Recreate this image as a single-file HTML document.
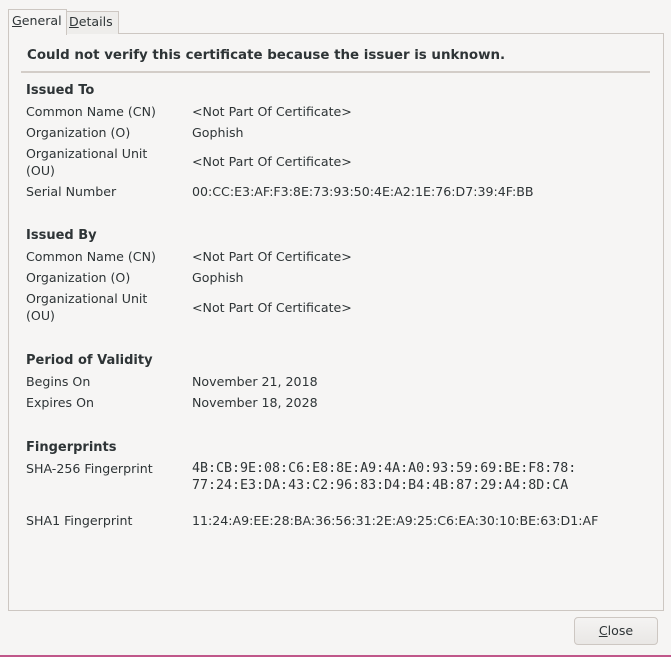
<html><head><style>
body{margin:0;width:671px;height:657px;background:#f6f5f4;font-family:"DejaVu Sans","Liberation Sans",sans-serif;font-size:12.6px;color:#2e3436;position:relative;overflow:hidden}
.a{position:absolute;white-space:nowrap;line-height:17px}
.b{font-weight:bold;font-size:13px}
.m{font-family:"DejaVu Sans Mono","Liberation Mono",monospace;font-size:13.3px}
</style></head><body>
<div style="position:absolute;left:8px;top:33px;width:654px;height:576px;border:1px solid #cdc7c2;background:#f6f5f4"></div>
<div style="position:absolute;left:8px;top:9px;width:57px;height:25px;border:1px solid #cdc7c2;border-bottom:none;background:#f6f5f4"></div>
<div style="position:absolute;left:66px;top:11px;width:51px;height:22px;border:1px solid #cdc7c2;border-bottom:none;background:#eeedeb"></div>
<div class="a" style="left:12px;top:12px"><u>G</u>eneral</div>
<div class="a" style="left:69px;top:13px"><u>D</u>etails</div>
<div class="a b" style="left:27px;top:47px;font-size:13.4px">Could not verify this certificate because the issuer is unknown.</div>
<div style="position:absolute;left:21px;top:71px;width:629px;height:2px;background:#d3cdc8"></div>
<div class="a b" style="left:26px;top:82px">Issued To</div>
<div class="a" style="left:26px;top:103px">Common Name (CN)</div><div class="a" style="left:192px;top:103px">&lt;Not Part Of Certificate&gt;</div>
<div class="a" style="left:26px;top:124px">Organization (O)</div><div class="a" style="left:192px;top:124px">Gophish</div>
<div class="a" style="left:26px;top:145px">Organizational Unit<br>(OU)</div><div class="a" style="left:192px;top:153px">&lt;Not Part Of Certificate&gt;</div>
<div class="a" style="left:26px;top:183px">Serial Number</div><div class="a" style="left:192px;top:183px">00:CC:E3:AF:F3:8E:73:93:50:4E:A2:1E:76:D7:39:4F:BB</div>
<div class="a b" style="left:26px;top:227px">Issued By</div>
<div class="a" style="left:26px;top:248px">Common Name (CN)</div><div class="a" style="left:192px;top:248px">&lt;Not Part Of Certificate&gt;</div>
<div class="a" style="left:26px;top:269px">Organization (O)</div><div class="a" style="left:192px;top:269px">Gophish</div>
<div class="a" style="left:26px;top:290px">Organizational Unit<br>(OU)</div><div class="a" style="left:192px;top:299px">&lt;Not Part Of Certificate&gt;</div>
<div class="a b" style="left:26px;top:352px">Period of Validity</div>
<div class="a" style="left:26px;top:373px">Begins On</div><div class="a" style="left:192px;top:373px">November 21, 2018</div>
<div class="a" style="left:26px;top:394px">Expires On</div><div class="a" style="left:192px;top:394px">November 18, 2028</div>
<div class="a b" style="left:26px;top:439px">Fingerprints</div>
<div class="a" style="left:26px;top:460px">SHA-256 Fingerprint</div>
<div class="a m" style="left:192px;top:460px;line-height:17px">4B:CB:9E:08:C6:E8:8E:A9:4A:A0:93:59:69:BE:F8:78:<br>77:24:E3:DA:43:C2:96:83:D4:B4:4B:87:29:A4:8D:CA</div>
<div class="a" style="left:26px;top:512px">SHA1 Fingerprint</div><div class="a" style="left:192px;top:512px">11:24:A9:EE:28:BA:36:56:31:2E:A9:25:C6:EA:30:10:BE:63:D1:AF</div>
<div style="position:absolute;left:574px;top:617px;width:82px;height:26px;border:1px solid #cdc7c2;border-radius:4px;background:linear-gradient(#f4f3f2,#e9e7e5)"></div>
<div class="a" style="left:574px;top:622px;width:84px;text-align:center"><u>C</u>lose</div>
<div style="position:absolute;left:0;top:655px;width:671px;height:2px;background:#c0578a"></div>
</body></html>
